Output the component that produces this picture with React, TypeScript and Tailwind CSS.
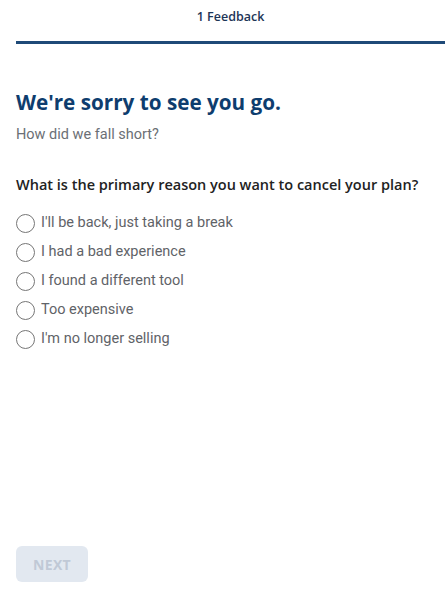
import React, { useState } from 'react';

const reasons = [
  "I'll be back, just taking a break",
  'I had a bad experience',
  'I found a different tool',
  'Too expensive',
  "I'm no longer selling",
];

const App: React.FC = () => {
  const [selected, setSelected] = useState<number | null>(null);

  return (
    <div className="flex min-h-screen flex-col bg-white font-['Open_Sans',sans-serif]">
      <div className="ml-4">
        <div className="flex h-[41px] items-start justify-center pt-[8px] text-[12.5px] font-semibold text-[#1d3557]">
          1 Feedback
        </div>
        <div className="h-[3px] bg-[#1f4a78]" />
      </div>

      <div className="px-4 pt-[44px]">
        <h1 className="text-[20.7px] font-bold leading-[28px] text-[#0e3d6e]">We're sorry to see you go.</h1>
        <p className="mt-[9px] font-['Roboto',sans-serif] text-[14.5px] leading-[20px] text-[#6b6f75]">How did we fall short?</p>

        <p className="mt-[30px] text-[14.5px] font-semibold leading-[20px] text-[#222]">
          What is the primary reason you want to cancel your plan?
        </p>

        <div className="mt-[18px] flex flex-col gap-[9px]">
          {reasons.map((r, i) => (
            <label key={i} className="flex h-[20px] cursor-pointer items-center gap-[6px]">
              <span
                onClick={() => setSelected(i)}
                className="flex h-[19px] w-[19px] items-center justify-center rounded-full border border-[#767676] bg-white"
              >
                {selected === i && <span className="h-[10px] w-[10px] rounded-full bg-[#1f4a78]" />}
              </span>
              <span className="font-['Roboto',sans-serif] text-[14.5px] text-[#5f6368]">{r}</span>
            </label>
          ))}
        </div>
      </div>

      <div className="mt-auto px-4 pb-[20px]">
        <button
          disabled
          className="h-[36px] w-[72px] rounded-md bg-[#e2e8f0] text-[14px] font-bold tracking-wide text-[#c0c9d6]"
        >
          NEXT
        </button>
      </div>
    </div>
  );
};

export default App;
